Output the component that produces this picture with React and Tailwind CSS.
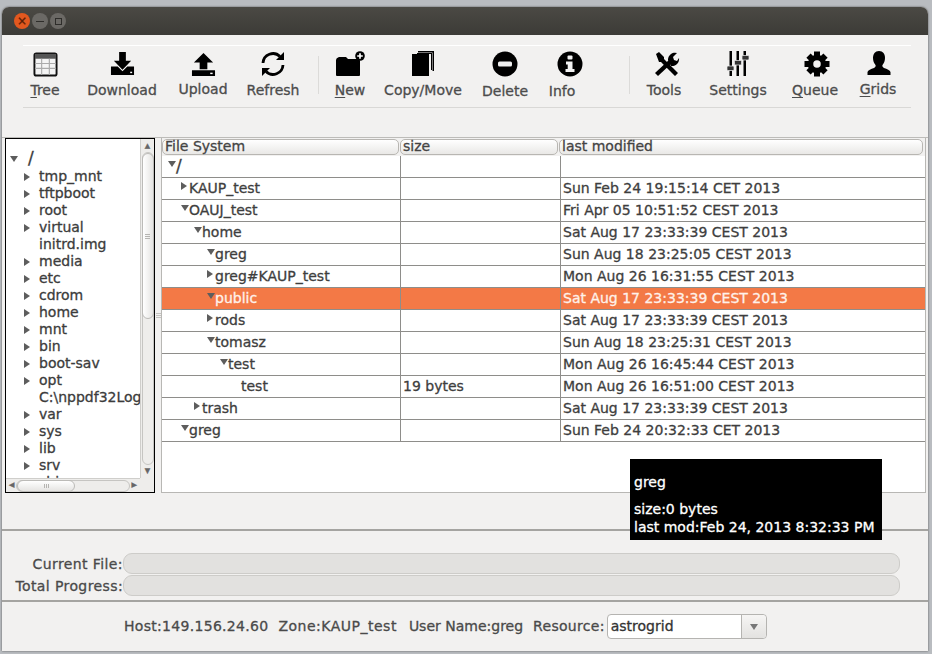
import React from "react";

const I = {
  tree: (
    <svg width="25" height="25" viewBox="0 0 26 26"><rect x="1.500" y="1.500" width="23" height="23" rx="2" fill="#f4f4f4" stroke="#111" strokeWidth="2"/><rect x="2" y="2" width="22" height="5" fill="#555"/><path d="M2 12h22M2 17h22M9 7v17M17 7v17" stroke="#aaa" strokeWidth="1.200"/></svg>
  ),
  download: (
    <svg width="25" height="25" viewBox="0 0 26 26"><path d="M9.500 0h7v9H22l-9 9.500L4 9h5.500z" fill="#000"/><path d="M1 15h7l5 5 5-5h7v9H1z" fill="#000"/><rect x="21" y="20.500" width="2" height="1.500" fill="#fff"/></svg>
  ),
  upload: (
    <svg width="25" height="25" viewBox="0 0 26 26"><path d="M13 1l10 10h-6v7H9v-7H3z" fill="#000"/><path d="M1 19h24v6H1z" fill="#000"/><rect x="20" y="21.500" width="2.500" height="1.500" fill="#fff"/></svg>
  ),
  refresh: (
    <svg width="26" height="26" viewBox="0 0 26 26"><path d="M3 12a10 10 0 0 1 17-6.500" fill="none" stroke="#000" strokeWidth="2.800"/><path d="M23 14a10 10 0 0 1-17 6.500" fill="none" stroke="#000" strokeWidth="2.800"/><path d="M24 1v8h-8zM2 25v-8h8z" fill="#000"/></svg>
  ),
  folder: (
    <svg width="30" height="26" viewBox="0 0 30 26"><path d="M1 9q0-2 3-3h7l2 2h9q3 0 3 2v2H1z" fill="#000"/><path d="M1 11.500h24V24q0 1-1 1H2q-1 0-1-1z" fill="#000"/><circle cx="25" cy="5" r="4.800" fill="#000"/><path d="M25 2.200v5.600M22.200 5h5.600" stroke="#fff" strokeWidth="1.700"/></svg>
  ),
  copy: (
    <svg width="22" height="26" viewBox="0 0 22 26"><path d="M6 0h16v20h-1.500V1.500H6z" fill="#000"/><path d="M5 2h15v.5V19h-1V3H5z" fill="#000"/><rect x="0" y="3" width="17" height="22" fill="#000"/></svg>
  ),
  delete: (
    <svg width="26" height="26" viewBox="0 0 26 26"><circle cx="13" cy="13" r="12.500" fill="#000"/><rect x="6" y="10.500" width="14" height="5" rx="1.500" fill="#eee"/></svg>
  ),
  info: (
    <svg width="26" height="26" viewBox="0 0 26 26"><circle cx="13" cy="13" r="12.500" fill="#000"/><rect x="10.500" y="4.500" width="5" height="4" rx="1" fill="#f2f2f2"/><path d="M9 10.500h6.500V18H17.500v3H8.500v-3h2.200v-4.500H9z" fill="#f2f2f2"/></svg>
  ),
  tools: (
    <svg width="26" height="26" viewBox="0 0 26 26"><path d="M1 22 L16 8 L19 11 L4 25z" fill="#000"/><path d="M14 9a7 7 0 0 1 9-7l-4 4 1 3 3 1 2-3a7 7 0 0 1-8 8z" fill="#000"/><path d="M2 3l3-2 5 5v2l9 9 5 5-3 3-5-5-9-9H5z" fill="#000"/></svg>
  ),
  settings: (
    <svg width="24" height="26" viewBox="0 0 24 26"><path d="M3.500 0h2.500v25H3.500zM10.500 0h2.500v25h-2.500zM17.500 0h2.500v25h-2.500z" fill="#000"/><rect x="1" y="15" width="7" height="4.500" rx="1" fill="#333" stroke="#eee" strokeWidth=".7"/><rect x="8.500" y="9.500" width="7" height="4.500" rx="1" fill="#333" stroke="#eee" strokeWidth=".7"/><rect x="16" y="4.500" width="7" height="4.500" rx="1" fill="#333" stroke="#eee" strokeWidth=".7"/></svg>
  ),
  gear: (
    <svg width="26" height="26" viewBox="0 0 26 26"><circle cx="13" cy="13" r="6.500" fill="none" stroke="#000" strokeWidth="5.500"/><g fill="#000"><rect x="10" y="0.500" width="6" height="5"/><rect x="10" y="20.500" width="6" height="5"/><rect x="0.500" y="10" width="5" height="6"/><rect x="20.500" y="10" width="5" height="6"/><rect x="10" y="1" width="6" height="5" transform="rotate(45 13 13)"/><rect x="10" y="20" width="6" height="5" transform="rotate(45 13 13)"/><rect x="10" y="1" width="6" height="5" transform="rotate(-45 13 13)"/><rect x="10" y="20" width="6" height="5" transform="rotate(-45 13 13)"/></g></svg>
  ),
  user: (
    <svg width="26" height="26" viewBox="0 0 26 26"><path d="M13 0c4 0 6 3 6 7 0 3-1 5-2.500 7-.5 1 0 2 1.500 3 3 1 6 2 6.500 4v3H1.500v-3c.5-2 3.500-3 6.500-4 1.500-1 2-2 1.500-3C8 12 7 10 7 7c0-4 2-7 6-7z" fill="#000"/></svg>
  ),
};

function Tool({ icon, label, u, w, labelCls = "" }) {
  const first = u ? label[0] : "";
  const rest = u ? label.slice(1) : label;
  return (
    <div className={`flex flex-col items-center shrink-0 ${w}`}>
      <div className="h-[30px] flex items-center justify-center">{icon}</div>
      <div className={`mt-[2px] text-[14px] leading-[18px] text-[#4c4c4c] whitespace-nowrap ${labelCls}`}>
        {first && <span className="underline underline-offset-2">{first}</span>}{rest}
      </div>
    </div>
  );
}

const leftItems = [
  ["tmp_mnt", 1], ["tftpboot", 1], ["root", 1], ["virtual", 1], ["initrd.img", 0], ["media", 1], ["etc", 1], ["cdrom", 1],
  ["home", 1], ["mnt", 1], ["bin", 1], ["boot-sav", 1], ["opt", 1], ["C:\\nppdf32Log", 0], ["var", 1], ["sys", 1], ["lib", 1], ["srv", 1], ["sbin", 1],
];

const rows = [
  ["/", 0, "d", "", ""],
  ["KAUP_test", 1, "r", "", "Sun Feb 24 19:15:14 CET 2013"],
  ["OAUJ_test", 1, "d", "", "Fri Apr 05 10:51:52 CEST 2013"],
  ["home", 2, "d", "", "Sat Aug 17 23:33:39 CEST 2013"],
  ["greg", 3, "d", "", "Sun Aug 18 23:25:05 CEST 2013"],
  ["greg#KAUP_test", 3, "r", "", "Mon Aug 26 16:31:55 CEST 2013"],
  ["public", 3, "d", "", "Sat Aug 17 23:33:39 CEST 2013", true],
  ["rods", 3, "r", "", "Sat Aug 17 23:33:39 CEST 2013"],
  ["tomasz", 3, "d", "", "Sun Aug 18 23:25:31 CEST 2013"],
  ["test", 4, "d", "", "Mon Aug 26 16:45:44 CEST 2013"],
  ["test", 5, "", "19 bytes", "Mon Aug 26 16:51:00 CEST 2013"],
  ["trash", 2, "r", "", "Sat Aug 17 23:33:39 CEST 2013"],
  ["greg", 1, "d", "", "Sun Feb 24 20:32:33 CET 2013"],
];

const Right = ({ c = "#5d5d5d" }) => <svg width="8" height="10" viewBox="0 0 8 10" className="shrink-0"><path d="M1 1l6 4-6 4z" fill={c}/></svg>;
const Down = ({ c = "#5d5d5d" }) => <svg width="10" height="8" viewBox="0 0 10 8" className="shrink-0"><path d="M1 1h8L5 7z" fill={c}/></svg>;

function Header({ w, children }) {
  return (
    <div className={`${w} h-[16px] shrink-0 pl-[2px] rounded-[5px] border border-[#b8b6b2] bg-gradient-to-b from-white to-[#e9e8e6] text-[14px] leading-[13px] text-[#444]`}>{children}</div>
  );
}

export default function App() {
  return (
    <div className="w-[932px] h-[654px] overflow-hidden bg-[#b9bcc0] pt-[7px] pl-[2px] pr-[4px] pb-[3px] font-['DejaVu_Sans',sans-serif] [-webkit-text-stroke:0.3px]">
      <div className="relative h-full flex flex-col rounded-t-[7px] overflow-hidden bg-[#f2f1f0] shadow-[0_0_2px_#444]">
        <div className="h-[28px] shrink-0 bg-gradient-to-b from-[#4b4944] to-[#3c3b37] flex items-center pl-[12px] gap-[2px]">
          <div className="w-[16px] h-[16px] rounded-full bg-[#e2581f] flex items-center justify-center text-[#5a1d05] text-[12px] leading-none">×</div>
          <div className="w-[16px] h-[16px] rounded-full bg-[#6b6965] flex items-center justify-center"><div className="w-[8px] h-[1px] bg-[#2e2d2a]"></div></div>
          <div className="w-[16px] h-[16px] rounded-full bg-[#6b6965] flex items-center justify-center"><div className="w-[7px] h-[7px] border border-[#2e2d2a]"></div></div>
        </div>

        <div className="shrink-0 h-[102px] pt-[10px]">
          <div className="ml-[21px] mr-[17px] h-[58px] box-content border-t border-t-white border-b border-b-[#d9d8d6] flex items-start pt-[3px]">
            <Tool icon={I.tree} label="Tree" u w="w-[40px] ml-[2px]" />
            <Tool icon={I.download} label="Download" w="w-[78px] ml-[18px]" />
            <Tool icon={I.upload} label="Upload" w="w-[60px] ml-[12px]" labelCls="-translate-y-[1px]" />
            <Tool icon={I.refresh} label="Refresh" w="w-[60px] ml-[10px]" />
            <div className="w-px h-[38px] mt-[7px] ml-[15px] bg-[#dcdbd9] shrink-0"></div>
            <Tool icon={I.folder} label="New" u w="w-[34px] ml-[14px]" />
            <Tool icon={I.copy} label="Copy/Move" w="w-[84px] ml-[14px]" />
            <Tool icon={I.delete} label="Delete" w="w-[50px] ml-[15px]" labelCls="translate-y-[1px]" />
            <Tool icon={I.info} label="Info" w="w-[30px] ml-[25px]" labelCls="translate-y-[1px] -translate-x-[8px]" />
            <div className="w-px h-[38px] mt-[7px] ml-[44px] bg-[#dcdbd9] shrink-0"></div>
            <Tool icon={I.tools} label="Tools" w="w-[40px] ml-[17px]" labelCls="-translate-x-[3px]" />
            <Tool icon={I.settings} label="Settings" w="w-[62px] ml-[20px]" />
            <Tool icon={I.gear} label="Queue" u w="w-[48px] ml-[24px]" labelCls="-translate-x-[2px]" />
            <Tool icon={I.user} label="Grids" u w="w-[38px] ml-[19px]" labelCls="-translate-y-[1px] -translate-x-[1px]" />
          </div>
        </div>

        <div className="shrink-0 h-[394px] border-t border-[#bdbcb9] flex pl-[3px] pr-[2px] pt-0 pb-[37px] border-b-2 border-b-[#a5a4a1]">
          <div className="w-[150px] h-[355px] shrink-0 border border-black bg-[#eeedeb] flex flex-col">
            <div className="flex-1 min-h-0 flex">
              <div className="w-[134px] bg-white overflow-hidden pl-[3px] pt-[10px] text-[14px] leading-[17px] text-[#3c3c3c] whitespace-nowrap">
                <div className="flex items-center h-[19px] gap-[8px]"><Down /><span className="text-[17px] pl-[1px]">/</span></div>
                {leftItems.map(([t, a]) => (
                  <div key={t} className="h-[17px] flex items-center">
                    <div className="w-[14px] shrink-0"></div>
                    <div className="w-[16px] shrink-0">{a ? <Right /> : null}</div>
                    <span>{t}</span>
                  </div>
                ))}
              </div>
              <div className="w-[14px] shrink-0 flex flex-col items-center py-[1px] border-l border-[#cfcecb]">
                <div className="text-[7px] leading-[12px] text-[#666] h-[12px]">▲</div>
                <div className="flex-1 w-[12px] rounded-full border border-[#c6c5c2] relative">
                  <div className="absolute left-[-1px] right-[-1px] top-0 h-[166px] rounded-full border border-[#bcbbb8] bg-gradient-to-r from-white to-[#e5e4e2] flex flex-col items-center justify-center gap-[1px]">
                    <div className="w-[5px] h-px bg-[#b5b4b1]"></div>
                    <div className="w-[5px] h-px bg-[#b5b4b1]"></div>
                    <div className="w-[5px] h-px bg-[#b5b4b1]"></div>
                  </div>
                </div>
                <div className="text-[7px] leading-[12px] text-[#666] h-[12px]">▼</div>
              </div>
            </div>
            <div className="h-[14px] shrink-0 flex items-center px-[3px] border-t border-[#cfcecb] w-[134px] text-[7px] text-[#666]">
              <span>◀</span>
              <div className="flex-1 h-[12px] mx-[2px] rounded-full border border-[#c6c5c2] relative">
                <div className="absolute left-0 top-[-1px] h-[12px] w-[58px] rounded-full border border-[#bcbbb8] bg-gradient-to-b from-white to-[#e5e4e2] flex items-center justify-center gap-[1px]">
                  <div className="w-px h-[4px] bg-[#b5b4b1]"></div>
                  <div className="w-px h-[4px] bg-[#b5b4b1]"></div>
                  <div className="w-px h-[4px] bg-[#b5b4b1]"></div>
                </div>
              </div>
              <span>▶</span>
            </div>
          </div>

          <div className="w-[6px] h-[355px] shrink-0 flex flex-col items-center justify-center gap-[1px]">
            <div className="w-[5px] h-px bg-[#c4c3c0]"></div>
            <div className="w-[5px] h-px bg-[#c4c3c0]"></div>
            <div className="w-[5px] h-px bg-[#c4c3c0]"></div>
          </div>

          <div className="w-[765px] h-[355px] shrink-0 border-l border-r border-b border-[#b8b7b4] flex flex-col bg-white">
            <div className="flex bg-[#f2f1f0] h-[18px] shrink-0 pt-[1px] items-start">
              <Header w="w-[237px]">File System</Header>
              <Header w="w-[158px] ml-[1px]">size</Header>
              <Header w="w-[364px] ml-[1px]">last modified</Header>
            </div>
            {rows.map((r, i) => (
              <div key={i} className={`flex h-[22px] shrink-0 border-b border-[#8e8d8a] text-[14px] ${r[5] ? "bg-[#f37946] text-[#fff1ea]" : "text-[#3e3e3e]"}`}>
                <div className="w-[238px] shrink-0 flex items-center overflow-hidden" style={{ paddingLeft: 5 + r[1] * 13 }}>
                  <div className="w-[9px] shrink-0 -translate-y-[3px]">{r[2] === "d" ? <Down /> : r[2] === "r" ? <Right /> : null}</div>
                  <span className={r[0] === "/" ? "text-[17px]" : ""}>{r[0]}</span>
                </div>
                <div className="w-[160px] shrink-0 border-l border-[#8e8d8a] flex items-center pl-[2px]">{r[3]}</div>
                <div className="flex-1 border-l border-[#8e8d8a] flex items-center pl-[2px] whitespace-nowrap">{r[4]}</div>
              </div>
            ))}
          </div>
        </div>

        <div className="shrink-0 h-[71px] border-b-2 border-b-[#a5a4a1] pl-[3px] pr-[28px] pt-[21px] flex flex-col text-[14px] tracking-[0.4px] text-[#4a4a4a]">
          <div className="flex items-center h-[22px]">
            <div className="w-[118px] shrink-0 text-right translate-y-[1px]">Current File:</div>
            <div className="flex-1 h-[21px] rounded-[9px] bg-[#e2e1df] border border-[#cdccc9]"></div>
          </div>
          <div className="flex items-center h-[22px]">
            <div className="w-[118px] shrink-0 text-right whitespace-nowrap translate-y-[1px]">Total Progress:</div>
            <div className="flex-1 h-[21px] rounded-[9px] bg-[#e2e1df] border border-[#cdccc9]"></div>
          </div>
        </div>

        <div className="flex-1 flex items-center pl-[122px] text-[14px] text-[#4a4a4a] whitespace-nowrap">
          <span className="tracking-[0.3px]">Host:149.156.24.60</span>
          <span className="ml-[10px] tracking-[0.5px]">Zone:KAUP_test</span>
          <span className="ml-[12px]">User Name:greg</span>
          <span className="ml-[10px] tracking-[0.3px]">Resource:</span>
          <div className="ml-[2px] w-[160px] h-[25px] flex rounded-[4px] border border-[#b5b4b1] bg-white text-[#333]">
            <div className="flex-1 pl-[3px] flex items-center">astrogrid</div>
            <div className="w-[25px] border-l border-[#b5b4b1] rounded-r-[4px] bg-gradient-to-b from-[#f6f5f4] to-[#e3e2e0] flex items-center justify-center"><Down c="#777" /></div>
          </div>
        </div>

        <div className="absolute left-[628px] top-[452px] w-[252px] h-[81px] bg-black text-white text-[14px] pl-[4px] leading-[18px] pt-[14px]">
          <div>greg</div>
          <div className="mt-[9px]">size:0 bytes</div>
          <div>last mod:Feb 24, 2013 8:32:33 PM</div>
        </div>
      </div>
    </div>
  );
}
